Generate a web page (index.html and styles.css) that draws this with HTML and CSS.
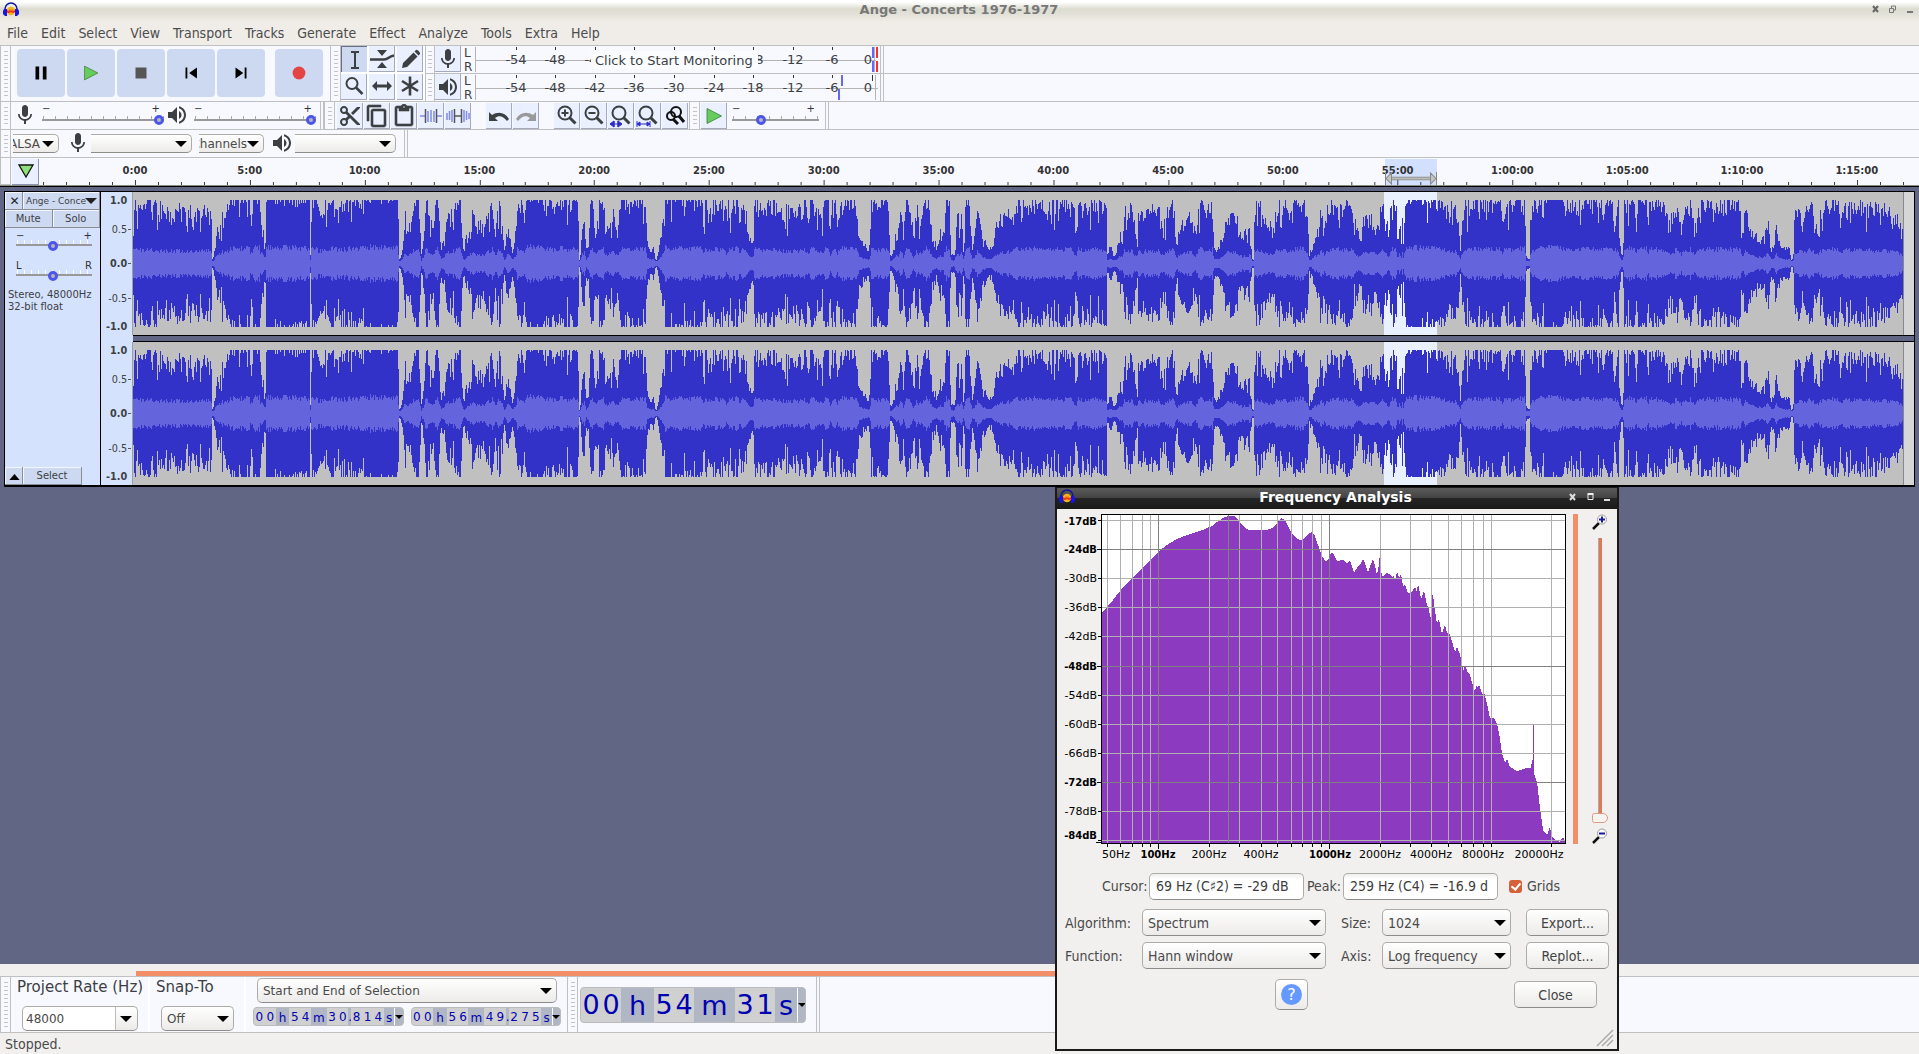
FILE: index.html
```html
<!DOCTYPE html>
<html lang="en">
<head>
<meta charset="utf-8">
<title>Ange - Concerts 1976-1977</title>
<link rel="stylesheet" href="styles.css">
</head>
<body>
<svg class="defs" aria-hidden="true">
  <symbol id="logo" viewBox="0 0 16 15"><path d="M2 9V7a6 6 0 0 1 12 0v2" fill="none" stroke="#14149c" stroke-width="1.5"/><circle cx="8" cy="9" r="4.2" fill="#f6b21b"/><path d="M4 9l1-1 1 2 1-3 1 3 1-3 1 3 1-2 1 1v1l-2 1-2-1-2 1-3-1z" fill="#f01c10"/><path d="M1 7h3v7H2L0 12V9zM15 7h-3v7h2l2-2V9z" fill="#1414e8"/></symbol>
  <symbol id="mic" viewBox="0 0 24 24"><path d="M12 14c1.66 0 3-1.34 3-3V5c0-1.660-1.340-3-3-3S9 3.340 9 5v6c0 1.660 1.340 3 3 3zm5.300-3c0 3-2.540 5.100-5.300 5.100S6.700 14 6.700 11H5c0 3.410 2.720 6.230 6 6.720V21h2v-3.280c3.280-.48 6-3.300 6-6.720h-1.700z"/></symbol>
  <symbol id="speaker" viewBox="0 0 24 24"><path d="M3 9v6h4l5 5V4L7 9H3zm13.500 3c0-1.770-1.020-3.290-2.500-4.030v8.050c1.480-.73 2.500-2.250 2.500-4.020zM14 3.230v2.060c2.890.86 5 3.540 5 6.710s-2.110 5.850-5 6.710v2.060c4.010-.91 7-4.490 7-8.770s-2.990-7.860-7-8.770z"/></symbol>
  <symbol id="lens" viewBox="0 0 24 24"><circle cx="10" cy="9" r="6.500" fill="none" stroke="currentColor" stroke-width="2"/><path d="M14.500 13.500l6 6" stroke="currentColor" stroke-width="3"/></symbol>
</svg>

<header class="titlebar"><svg class="logo"><use href="#logo"/></svg><h1>Ange - Concerts 1976-1977</h1>
  <svg class="wm" viewBox="0 0 44 10"><path d="M2 2l5 6M7 2L2 8" stroke="#666" stroke-width="2"/><path d="M18.500 4.500h4v4h-4zM20.500 4v-2h4v4h-2" fill="none" stroke="#777"/><path d="M36 7h6v2h-6z" fill="#777"/></svg></header>
<nav class="menubar"><a href="#">File</a><a href="#">Edit</a><a href="#">Select</a><a href="#">View</a><a href="#">Transport</a><a href="#">Tracks</a><a href="#">Generate</a><a href="#">Effect</a><a href="#">Analyze</a><a href="#">Tools</a><a href="#">Extra</a><a href="#">Help</a></nav>

<section class="bar bar-top">
  <i class="grip"></i>
  <div class="transport">
    <button aria-label="Pause"><svg viewBox="0 0 24 24"><path d="M6 5h4v14H6zM14 5h4v14h-4z" fill="#000"/></svg></button>
    <button aria-label="Play"><svg viewBox="0 0 24 24"><path d="M5 4.500v15L19.500 12z" fill="#66cc5c" stroke="#3c7a36" stroke-width=".8"/></svg></button>
    <button aria-label="Stop"><svg viewBox="0 0 24 24"><path d="M6 6h12v12H6z" fill="#555"/></svg></button>
    <button aria-label="Skip to start"><svg viewBox="0 0 24 24"><path d="M6 6h2v12H6zm12.500 0v12L10 12z" fill="#000"/></svg></button>
    <button aria-label="Skip to end"><svg viewBox="0 0 24 24"><path d="M16 6h2v12h-2zM6 6v12l8.500-6z" fill="#000"/></svg></button>
    <button aria-label="Record" class="rec"><svg viewBox="0 0 24 24"><circle cx="12" cy="12" r="7" fill="#e34444"/></svg></button>
  </div>
  <i class="grip"></i>
  <div class="tools">
    <button class="tb on" aria-label="Selection"><svg viewBox="0 0 24 24"><path d="M8 4h3l1 1 1-1h3M8 20h3l1-1 1 1h3M12 5v14" fill="none" stroke="currentColor" stroke-width="2"/></svg></button>
    <button class="tb" aria-label="Envelope"><svg viewBox="0 0 24 24"><path d="M7 3h10l-5 6zM7 21h10l-5-6z"/><path d="M0 12.500h14c5 0 4-3 10-4" fill="none" stroke="currentColor" stroke-width="2.500"/></svg></button>
    <button class="tb" aria-label="Draw"><svg viewBox="0 0 24 24"><path d="M4 21l1-5L15.500 5.500l4 4L9 20zM16.500 4.500l1.500-1.500c1-1 5 3 4 4l-1.500 1.500z"/></svg></button>
    <button class="tb" aria-label="Zoom"><svg viewBox="0 0 24 24"><circle cx="10" cy="9.500" r="5.500" fill="none" stroke="currentColor" stroke-width="2"/><path d="M14 13.500l6.500 6.500" stroke="currentColor" stroke-width="2.500"/></svg></button>
    <button class="tb" aria-label="Time shift"><svg viewBox="0 0 24 24"><path d="M2 12l5-5v3.500h10V7l5 5-5 5v-3.500H7V17z"/></svg></button>
    <button class="tb" aria-label="Multi-tool"><svg viewBox="0 0 24 24"><path d="M12 2.500v19M4 7l16 10M20 7L4 17" stroke="currentColor" stroke-width="2.600"/></svg></button>
  </div>
  <div class="meters">
    <div class="meter-row"><i class="grip"></i><button class="tb" aria-label="Recording meter"><svg><use href="#mic"/></svg></button>
      <svg class="meter" viewBox="0 0 414 27"><g class="lr"><text x="2" y="11">L</text><text x="2" y="25">R</text></g><path class="axis" d="M13.500 1v25M13.500 14.500h400M412.500 1v25"/><path class="tick" d="M54.500 1v3M93.500 1v3M133.500 1v3M172.500 1v3M212.500 1v3M252.500 1v3M291.500 1v3M331.500 1v3M370.500 1v3M410.500 1v6"/><g class="num"><text x="54" y="18">-54</text><text x="93" y="18">-48</text><text x="133" y="18">-42</text><text x="291" y="18">-18</text><text x="331" y="18">-12</text><text x="370" y="18">-6</text><text x="406" y="18">0</text></g><path d="M410 1h2v11h-2zM410 15h2v11h-2z" fill="#6666f8"/><path d="M414 1h2v11h-2zM414 15h2v11h-2z" fill="#fa3030"/><path d="M129 5h167v18H129z" fill="#fbfcff"/><text x="133" y="19" class="mon">Click to Start Monitoring</text></svg><i class="edge"></i></div>
    <div class="meter-row"><i class="grip"></i><button class="tb" aria-label="Playback meter"><svg><use href="#speaker"/></svg></button>
      <svg class="meter" viewBox="0 0 414 27"><g class="lr"><text x="2" y="11">L</text><text x="2" y="25">R</text></g><path class="axis" d="M13.500 1v25M13.500 14.500h402M413.500 1v25"/><path class="tick" d="M54.500 1v3M93.500 1v3M133.500 1v3M172.500 1v3M212.500 1v3M252.500 1v3M291.500 1v3M331.500 1v3M370.500 1v3M410.500 1v6"/><g class="num"><text x="54" y="18">-54</text><text x="93" y="18">-48</text><text x="133" y="18">-42</text><text x="172" y="18">-36</text><text x="212" y="18">-30</text><text x="252" y="18">-24</text><text x="291" y="18">-18</text><text x="331" y="18">-12</text><text x="370" y="18">-6</text><text x="406" y="18">0</text></g><path d="M379 1h2v11h-2zM376 15h2v11h-2z" fill="#6666f8"/></svg><i class="edge"></i></div>
  </div>
</section>

<section class="bar bar-mid">
  <i class="grip"></i>
  <svg class="ico mic-in"><use href="#mic"/></svg>
  <div class="slider"><span>−</span><span>+</span><input type="range" value="100" aria-label="Recording volume"></div>
  <svg class="ico"><use href="#speaker"/></svg>
  <div class="slider after"><span>−</span><span>+</span><input type="range" value="100" aria-label="Playback volume"></div>
  <i class="edge"></i><i class="grip"></i>
  <div class="group">
    <button class="tb" aria-label="Cut"><svg viewBox="0 0 24 24"><path d="M9.640 7.640c.23-.5.360-1.050.36-1.640 0-2.210-1.790-4-4-4S2 3.790 2 6s1.790 4 4 4c.59 0 1.140-.13 1.640-.36L10 12l-2.360 2.360C7.140 14.130 6.590 14 6 14c-2.210 0-4 1.790-4 4s1.790 4 4 4 4-1.790 4-4c0-.59-.13-1.140-.36-1.640L12 14l7 7h3v-1L9.640 7.640zM6 8a2 2 0 1 1 0-4 2 2 0 0 1 0 4zm0 12a2 2 0 1 1 0-4 2 2 0 0 1 0 4zM19 3l-6 6 2 2 7-7V3z"/></svg></button>
    <button class="tb" aria-label="Copy"><svg viewBox="0 0 24 24"><path d="M16 1H4c-1.100 0-2 .9-2 2v14h2V3h12V1zm3 4H8c-1.100 0-2 .9-2 2v14c0 1.100.9 2 2 2h11c1.100 0 2-.9 2-2V7c0-1.100-.9-2-2-2zm0 16H8V7h11v14z" stroke="currentColor" stroke-width=".6"/></svg></button>
    <button class="tb" aria-label="Paste"><svg viewBox="0 0 24 24"><path d="M19 2h-4.180C14.400.84 13.300 0 12 0S9.600.84 9.180 2H5c-1.100 0-2 .9-2 2v16c0 1.100.9 2 2 2h14c1.100 0 2-.9 2-2V4c0-1.100-.9-2-2-2zm-7 0a1 1 0 1 1 0 2 1 1 0 0 1 0-2zm7 18H5V4h2v3h10V4h2v16z" stroke="currentColor" stroke-width=".6"/></svg></button>
    <button class="tb" aria-label="Trim"><svg class="line" viewBox="0 0 24 24" stroke="#7f8de8" stroke-width="1.500"><path d="M1 12h5M18 12h5M9 7v11M12 6v12M15 7v11"/><path d="M6.500 5v14M17.500 5v14" stroke="#555"/></svg></button>
    <button class="tb" aria-label="Silence"><svg class="line" viewBox="0 0 24 24" stroke="#7f8de8" stroke-width="1.500"><path d="M1 9v7M3.500 7v9M6 6v12M18 6v12M20.500 7v9M23 9v6"/><path d="M8.500 5v14M15.500 5v14M9 12h6" stroke="#555"/></svg></button>
  </div>
  <div class="group">
    <button class="tb" aria-label="Undo"><svg viewBox="0 0 24 24"><path d="M2 8v9h9l-3-3c4-3 8-2 12 3l2-2C18 8 11 7 5 11z"/></svg></button>
    <button class="tb off" aria-label="Redo"><svg viewBox="0 0 24 24"><path d="M22 8v9h-9l3-3c-4-3-8-2-12 3l-2-2C6 8 13 7 19 11z"/></svg></button>
  </div>
  <div class="group">
    <button class="tb" aria-label="Zoom in"><svg viewBox="0 0 24 24"><use href="#lens"/><path d="M6.500 9h7M10 5.500v7" stroke="currentColor" stroke-width="2"/></svg></button>
    <button class="tb" aria-label="Zoom out"><svg viewBox="0 0 24 24"><use href="#lens"/><path d="M6.500 9h7" stroke="currentColor" stroke-width="2"/></svg></button>
    <button class="tb" aria-label="Zoom to selection"><svg viewBox="0 0 24 24"><use href="#lens"/><path d="M1 20h12M5 17l-4 3 4 3zM9 17l4 3-4 3zM5 17v6M9 17v6" stroke="#2b2bc4" fill="#2b2bc4"/></svg></button>
    <button class="tb" aria-label="Fit project"><svg viewBox="0 0 24 24"><use href="#lens"/><path d="M1 20h13M1 17v6M14 17v6M4 18l-3 2 3 2zM11 18l3 2-3 2z" stroke="#2b2bc4" fill="#2b2bc4"/></svg></button>
    <button class="tb" aria-label="Zoom toggle"><svg class="line" viewBox="0 0 24 24" stroke="#111" stroke-width="2"><circle cx="13" cy="8" r="5"/><circle cx="8" cy="12" r="4"/><path d="M16 12l5 6M10 15l5 5" stroke-width="3"/></svg></button>
  </div>
  <i class="grip"></i>
  <button class="tb" aria-label="Play at speed"><svg viewBox="0 0 24 24"><path d="M5 4.500v15L19.500 12z" fill="#66cc5c" stroke="#3c7a36" stroke-width=".8"/></svg></button>
  <div class="slider short"><span>−</span><span>+</span><input type="range" value="31" aria-label="Play speed"></div>
  <i class="edge"></i>
</section>

<section class="bar bar-dev">
  <i class="grip"></i>
  <div class="combo clip host"><select aria-label="Audio host"><option>ALSA</option></select></div>
  <svg class="ico"><use href="#mic"/></svg>
  <div class="combo clip dev"><select aria-label="Recording device"><option></option></select></div>
  <div class="combo clip chan"><select aria-label="Channels"><option>2 Channels</option></select></div>
  <svg class="ico"><use href="#speaker"/></svg>
  <div class="combo clip dev"><select aria-label="Playback device"><option></option></select></div>
  <i class="edge"></i>
</section>

<section class="timeline">
  <i class="stub"></i>
  <button class="pin" aria-label="Pin play head"><svg viewBox="0 0 24 24"><path d="M5 6h14l-7 12z" fill="#8fe07c" stroke="#111" stroke-width="1.300"/></svg></button>
  <div class="ruler">
    <div class="sel-time"></div>
    <svg class="ticks" viewBox="0 0 1771 27" preserveAspectRatio="none"><path id="ticks"/></svg>
    <div class="labels"><span>0:00</span><span>5:00</span><span>10:00</span><span>15:00</span><span>20:00</span><span>25:00</span><span>30:00</span><span>35:00</span><span>40:00</span><span>45:00</span><span>50:00</span><span>55:00</span><span>1:00:00</span><span>1:05:00</span><span>1:10:00</span><span>1:15:00</span></div>
    <svg class="loop" viewBox="0 0 52 14" preserveAspectRatio="none"><path d="M.5 0v14M51.500 0v14" stroke="#888"/><path d="M6 5.500h40v3H6z" fill="#bbb" stroke="#888"/><path d="M1 7l5.500-6v12zM51 7l-5.500-6v12z" fill="#c6c6c0" stroke="#888"/></svg>
  </div>
</section>

<main class="workspace">
  <article class="track">
    <aside class="panel">
      <div class="cells"><button class="x" aria-label="Close track">✕</button><button class="name"><span>Ange - Conce</span></button></div>
      <div class="cells half"><button>Mute</button><button>Solo</button></div>
      <div class="slider mini"><span>−</span><span>+</span><input type="range" value="49" aria-label="Gain"></div>
      <div class="slider mini"><span>L</span><span>R</span><input type="range" value="49" aria-label="Pan"></div>
      <p>Stereo, 48000Hz<br>32-bit float</p>
      <div class="cells foot"><button class="x" aria-label="Collapse"><svg viewBox="0 0 12 7"><path d="M0 7h12L6 0z"/></svg></button><button class="select">Select</button></div>
    </aside>
    <div class="channels">
      <div class="channel"><svg class="vruler" viewBox="0 0 32 143"><g><text class="b" x="27" y="10">1.0</text><text x="27" y="40">0.5</text><text class="b" x="27" y="75">0.0</text><text x="27" y="111">-0.5</text><text class="b" x="27" y="140">-1.0</text></g><path d="M28 36.500h3M28 71.500h3M28 107.500h3"/></svg>
        <div class="wave"><div class="sel"></div><svg viewBox="0 0 1771 143" preserveAspectRatio="none"><path class="peak"/><path class="rms"/></svg></div></div>
      <div class="split"></div>
      <div class="channel"><svg class="vruler" viewBox="0 0 32 143"><g><text class="b" x="27" y="10">1.0</text><text x="27" y="40">0.5</text><text class="b" x="27" y="75">0.0</text><text x="27" y="111">-0.5</text><text class="b" x="27" y="140">-1.0</text></g><path d="M28 36.500h3M28 71.500h3M28 107.500h3"/></svg>
        <div class="wave"><div class="sel"></div><svg viewBox="0 0 1771 143" preserveAspectRatio="none"><path class="peak"/><path class="rms"/></svg></div></div>
    </div>
  </article>
</main>

<div class="hscroll"><div></div></div>
<section class="bar bar-bottom">
  <i class="grip"></i>
  <div class="field rate"><label for="rate">Project Rate (Hz)</label><div class="combo edit"><input id="rate" value="48000"><i></i></div></div>
  <div class="field snap"><label for="snap">Snap-To</label><div class="combo"><select id="snap"><option>Off</option></select></div></div>
  <div class="range">
    <div class="combo"><select aria-label="Selection format"><option>Start and End of Selection</option></select></div>
    <div class="times">
      <div class="time"><b>0</b><b>0</b><i class="h">h</i><b>5</b><b>4</b><i class="m">m</i><b>3</b><b>0</b><i class="dot">.</i><b>8</b><b>1</b><b>4</b><i class="s">s</i><button aria-label="Start format"></button></div>
      <div class="time"><b>0</b><b>0</b><i class="h">h</i><b>5</b><b>6</b><i class="m">m</i><b>4</b><b>9</b><i class="dot">.</i><b>2</b><b>7</b><b>5</b><i class="s">s</i><button aria-label="End format"></button></div>
    </div>
  </div>
  <i class="grip"></i>
  <div class="time big"><b>0</b><b>0</b><i class="h">h</i><b>5</b><b>4</b><i class="m">m</i><b>3</b><b>1</b><i class="s">s</i><button aria-label="Position format"></button></div>
  <i class="edge"></i>
</section>
<footer class="status">Stopped.</footer>

<div class="dialog" role="dialog" aria-label="Frequency Analysis">
  <div class="dlg-title"><svg class="logo"><use href="#logo"/></svg><h2>Frequency Analysis</h2><svg class="wm" viewBox="0 0 44 10"><path d="M2 2l5 6M7 2L2 8" stroke="#ddd" stroke-width="2"/><path d="M20 2.500h5v5h-5z" fill="none" stroke="#eee"/><path d="M19.500 2h6" stroke="#eee" stroke-width="2"/><path d="M36 7h6v2h-6z" fill="#ddd"/></svg></div>
  <div class="plot">
    <svg class="chart" viewBox="-44 -6 510 356">
      <path d="M0 0h463v329H0z" fill="#fff"/>
      <path class="spec" d="M0 328V97L6 91 11 85 18 76 30 63 40 53 48 45 56 37 65 30 75 24 85 20 95 17 103 14 110 11 115 7 121 3 126 1H132L135 3 138 7 143 13 147 15H165L170 13 175 8 179 3 183 5 188 15 193 22 198 25 201 24 206 19 210 17 213 21 216 30 220 41 224 47 227 43 229 38H231L235 46 241 45 245 48 248 45 252 58 255 53 259 48 261 44 263 48 266 57 271 44 273 50 275 60 277 50V43H278V53L281 62 284 58 287 59 290 62 292 60 293 67 295 56 297 63 299 59 301 71 303 69 306 78H309L313 72 315 77 316 68 319 84 322 76 325 90 327 93 328 102H329V80H331L334 103 335 108 337 104 340 119 343 110 345 118 347 117 350 126 353 137 355 132 358 139 360 150 362 156 363 149 366 158 368 160 371 171 373 176 375 169 376 174 377 169 380 179 382 177 385 189 388 203H392L395 209 397 218 400 238 403 248 405 244 408 252 415 256 425 253H429L430 245H431V210H432V259L435 267 438 293 441 315 445 320 448 312 450 322 455 326 458 327 461 322 463 327V328z"/>
      <path class="grid" d="M0 5.500h463M0 63.500h463M0 92.500h463M0 121.500h463M0 180.500h463M0 209.500h463M0 238.500h463M0 296.500h463M0 325.500h463M5.500 0v329M18.500 0v329M30.500 0v329M40.500 0v329M48.500 0v329M107.500 0v329M137.500 0v329M159.500 0v329M175.500 0v329M189.500 0v329M200.500 0v329M210.500 0v329M219.500 0v329M278.500 0v329M308.500 0v329M329.500 0v329M346.500 0v329M359.500 0v329M371.500 0v329M381.500 0v329M389.500 0v329M449.500 0v329"/>
      <path class="grid major" d="M0 34.500h463M0 151.500h463M0 267.500h463M56.500 0v329M126.500 0v329M227.500 0v329"/>
      <path class="frame" d="M-.5-.5h464v329h-464zM-4 5.500h3M-5 34.500h4M-4 63.500h3M-4 92.500h3M-4 121.500h3M-5 151.500h4M-4 180.500h3M-4 209.500h3M-4 238.500h3M-5 267.500h4M-4 296.500h3M-4 325.500h3M-6 327.500h5M5.500 329v3M18.500 329v3M30.500 329v3M40.500 329v3M48.500 329v3M56.500 329v5M107.500 329v3M137.500 329v3M159.500 329v3M175.500 329v3M189.500 329v3M200.500 329v3M210.500 329v3M219.500 329v3M227.500 329v5M278.500 329v3M308.500 329v3M329.500 329v3M346.500 329v3M359.500 329v3M371.500 329v3M381.500 329v3M389.500 329v3M449.500 329v3"/>
      <g class="yl"><text class="b" x="-5" y="10">-17dB</text><text class="b" x="-5" y="38">-24dB</text><text x="-5" y="67">-30dB</text><text x="-5" y="96">-36dB</text><text x="-5" y="125">-42dB</text><text class="b" x="-5" y="155">-48dB</text><text x="-5" y="184">-54dB</text><text x="-5" y="213">-60dB</text><text x="-5" y="242">-66dB</text><text class="b" x="-5" y="271">-72dB</text><text x="-5" y="300">-78dB</text><text class="b" x="-5" y="324">-84dB</text></g>
      <g class="xl"><text x="14" y="343">50Hz</text><text class="b" x="56" y="343">100Hz</text><text x="107" y="343">200Hz</text><text x="159" y="343">400Hz</text><text class="b" x="228" y="343">1000Hz</text><text x="278" y="343">2000Hz</text><text x="329" y="343">4000Hz</text><text x="381" y="343">8000Hz</text><text x="437" y="343">20000Hz</text></g>
    </svg>
    <div class="pan"></div>
    <div class="vzoom">
      <svg viewBox="0 0 16 16"><path d="M1 15l6-6" stroke="#111" stroke-width="2.500"/><circle cx="10" cy="5.500" r="4.500" fill="#fff" stroke="#999"/><path d="M7 5.500h6M10 2.500v6" stroke="#1616a0" stroke-width="2"/></svg>
      <input type="range" value="0" aria-label="Vertical zoom">
      <svg viewBox="0 0 16 16"><path d="M1 15l6-6" stroke="#111" stroke-width="2.500"/><circle cx="10" cy="5.500" r="4.500" fill="#fff" stroke="#999"/><path d="M7 5.500h6" stroke="#1616a0" stroke-width="2"/></svg>
    </div>
  </div>
  <div class="row readout"><label for="cur">Cursor:</label><input id="cur" value="69 Hz (C♯2) = -29 dB" readonly><label for="pk">Peak:</label><input id="pk" value="259 Hz (C4) = -16.9 d" readonly><label class="check"><input type="checkbox" checked>Grids</label></div>
  <div class="form">
    <label for="alg">Algorithm:</label><div class="combo"><select id="alg"><option>Spectrum</option></select></div><label for="size">Size:</label><div class="combo"><select id="size"><option>1024</option></select></div><button class="btn">Export...</button>
    <label for="fn">Function:</label><div class="combo"><select id="fn"><option>Hann window</option></select></div><label for="axis">Axis:</label><div class="combo"><select id="axis"><option>Log frequency</option></select></div><button class="btn">Replot...</button>
  </div>
  <div class="row foot"><button class="btn help" aria-label="Help"><span>?</span></button><button class="btn close">Close</button></div>
  <svg class="sizer" viewBox="0 0 18 18"><path d="M1 17L17 1M6 17L17 6M11 17l6-6" stroke="#aaa" stroke-width="1.500"/></svg>
</div>
<script src="app.js"></script>
</body>
</html>
```
FILE: styles.css
```css
* { box-sizing: border-box; }
:root {
  --line: #bfc0c2;
  --bar: #f8f9ff;
  --face: #cdd9f1;
  --panel: #d5e2fe;
  --chrome: #f1f0ee;
}
body {
  margin: 0;
  min-height: 100vh;
  display: flex;
  flex-direction: column;
  position: relative;
  overflow-x: hidden;
  background: var(--chrome);
  color: #4a4a4a;
  font: 14px "DejaVu Sans Condensed", "DejaVu Sans", sans-serif;
}
button, input, select { font: inherit; color: inherit; margin: 0; padding: 0; border: 0; outline: 0; background: none; }
button { display: flex; align-items: center; justify-content: center; }
i { font-style: normal; }
h1, h2, p { margin: 0; }
.defs { position: absolute; width: 0; height: 0; }

.titlebar { display: flex; align-items: center; height: 22px; padding: 0 4px 4px 3px; background: linear-gradient(#fff 2px, #dcdcd0 9px, #e2e1d8 14px, #f0ede8); }
.logo { width: 16px; height: 15px; flex: none; }
.titlebar h1 { flex: 1; text-align: center; font: bold 13px "DejaVu Sans", sans-serif; color: #777; padding-left: 28px; }
.wm { width: 44px; height: 10px; flex: none; }
.menubar { display: flex; gap: 13px; height: 23px; padding: 0 7px 2px; align-items: center; background: #f0ede8; }
.menubar a { color: #4c4c4c; text-decoration: none; }

/* toolbars */
.bar { display: flex; background: var(--bar); border-top: 1px solid var(--line); }
.grip { flex: none; width: 11px; border-left: 1px solid var(--line); border-right: 1px solid var(--line); background: repeating-linear-gradient(#c4c4c4 0 1px, transparent 1px 4px) center / 4px calc(100% - 10px) no-repeat; }
.edge { width: 4px; flex: none; border: solid var(--line); border-width: 0 1px; }
.bar-top { height: 56px; }
.transport { display: flex; align-items: center; gap: 2px; padding: 0 7px 1px 6px; }
.transport button { width: 48px; height: 48px; border-radius: 4px; background: var(--face); }
.transport .rec { margin-left: 8px; }
.transport svg { width: 22px; height: 22px; }
.tools { display: grid; grid-template-columns: repeat(3, 28px); background: #fff; }
.tb { width: 26px; height: 26px; flex: none; background: #eaf0ff; border: solid #a4aabc; border-width: 0 1px 1px 0; color: #3c4043; }
.tb.on { background: var(--face); border: solid #6a7088; border-width: 1px 0 0 1px; }
.tb.off { color: #999; }
.tb svg { width: 24px; height: 24px; fill: currentColor; flex: none; }
.tb svg.line { fill: none; }
.meters { flex: 1; display: grid; grid-template-rows: 27px 28px; }
.meter-row { display: flex; }
.meter-row + .meter-row { border-top: 1px solid var(--line); }
.meter-row .grip { width: 10px; }
.meter-row .tb { margin-right: 1px; }
.meter { width: 414px; height: 27px; flex: none; margin-right: 4px; overflow: visible; }
.meter text { font: 13px "DejaVu Sans", sans-serif; fill: #3c4043; }
.meter .num { text-anchor: middle; }
.meter .lr text { font-size: 12px; }
.axis { stroke: #b4b4b4; fill: none; shape-rendering: crispEdges; }
.tick { stroke: #333; shape-rendering: crispEdges; }

.bar-mid { height: 28px; }
.bar-mid .tb { margin-top: 1px; }
.ico { width: 24px; height: 24px; flex: none; margin: 1px 0; fill: #3c4043; }
.mic-in { margin-left: 2px; margin-right: 5px; }
.slider { width: 122px; flex: none; display: grid; grid-template-columns: 1fr 1fr; grid-template-rows: 10px 15px; font: 10px "DejaVu Sans", sans-serif; color: #333; }
.slider span { line-height: 14px; }
.slider span + span { text-align: right; padding-right: 4px; }
.slider input, .vzoom input { appearance: none; -webkit-appearance: none; }
.slider input { grid-column: 1 / 3; width: 100%; height: 14px; background: linear-gradient(#999, #999) 0 7px / 100% 2px no-repeat, repeating-linear-gradient(90deg, #aaa 0 1px, transparent 1px 12px) 1px 4px / 100% 3px no-repeat; }
.slider input::-webkit-slider-thumb { -webkit-appearance: none; width: 10px; height: 10px; margin-top: 1px; border-radius: 50%; border: 3px solid #4c55ec; background: #b8b8b8; }
.bar-mid .slider + .ico { margin-left: 1px; margin-right: 5px; }
.slider.after { margin-right: 4px; }
.slider.short { width: 87px; margin: 0 6px 0 5px; }
.group { display: flex; gap: 1px; padding-left: 1px; margin-right: 14px; }
.grip + .group { padding-left: 2px; }
.bar-mid .group + .grip { margin-left: -13px; }
.bar-mid .grip + .tb { margin-left: 1px; }

.combo { position: relative; display: flex; }
.combo::after, .time button::after { content: ""; border: 6px solid transparent; border-top-color: #000; border-bottom: 0; }
.combo::after { position: absolute; right: 10px; top: 50%; margin-top: -3px; pointer-events: none; }
.combo select { appearance: none; width: 100%; padding-left: 5px; }
.combo select, .btn, .edit, .readout > input { border: 1px solid #aeaca8; border-bottom-color: #8e8c88; border-radius: 5px; background: linear-gradient(#fff, #ecebe9); }
.bar-dev { height: 28px; align-items: stretch; }
.bar-dev .combo { height: 19px; margin-top: 4px; overflow: hidden; justify-content: flex-end; font: 12px "DejaVu Sans", sans-serif; }
.bar-dev .combo::after { right: 5px; }
.bar-dev select { flex: none; width: calc(100% + 8px); }
.bar-dev .host { width: 46px; margin-left: 2px; margin-right: 7px; }
.bar-dev .host select { padding-left: 3px; }
.bar-dev .dev { width: 101px; }
.bar-dev .chan { width: 65px; margin-left: 7px; margin-right: 6px; }
.bar-dev .chan select { width: 90px; }
.bar-dev .ico + .dev { margin-left: 1px; }
.bar-dev .edge { margin-left: 8px; }

/* timeline */
.timeline { display: flex; height: 29px; background: var(--bar); border-top: 1px solid var(--line); border-bottom: 1px solid #8a8d84; padding-right: 15px; }
.stub { width: 11px; border: 1px solid var(--line); border-top: 0; }
.pin { width: 27px; height: 26px; margin: 1px 95px 0 1px; padding: 0 0 2px 2px; background: #eaf0ff; border: solid #8a94b0; border-width: 0 1px 1px 0; }
.pin svg { width: 24px; height: 24px; flex: none; }
.ruler { flex: 1; position: relative; }
.ticks { position: absolute; inset: 0; width: 100%; height: 27px; overflow: visible; }
.ticks path { stroke: #3c3c3c; fill: none; shape-rendering: crispEdges; }
.labels { position: relative; display: grid; grid-template-columns: repeat(15, 300fr) 126fr; font: bold 10px/12px "DejaVu Sans", sans-serif; color: #333; padding-top: 7px; }
.labels span { width: 2px; display: flex; justify-content: center; white-space: nowrap; }
.sel-time, .loop { position: absolute; left: 70.7%; width: 2.94%; }
.sel-time { top: 1px; bottom: 0; background: #d2e0fd; }
.loop { top: 14px; height: 13px; }

/* tracks */
.workspace { flex: 1; background: #626685; border-top: 1px solid #000; padding: 4px 4px 0; }
.track { display: flex; border: 1px solid #000; border-bottom-width: 2px; color: #3c4043; }
.panel { width: 96px; flex: none; background: var(--panel); border-right: 1px solid #000; display: flex; flex-direction: column; font: 10px/12px "DejaVu Sans", sans-serif; }
.cells { display: grid; grid-template-columns: 18px 1fr; }
.cells.half { grid-template-columns: 1fr 1fr; }
.cells button { height: 18px; background: var(--face); border: solid #8a8d94; border-width: 0 1px 1px 0; box-shadow: inset 1px 1px #f2f6ff; overflow: hidden; }
.cells.foot { grid-template-columns: 18px 59px; margin-top: auto; }
.cells svg { width: 11px; height: 6px; margin-top: 2px; }
.cells .x { padding-left: 2px; font-size: 12px; color: #222; }
.name { position: relative; font-size: 9px; }
.cells .name { justify-content: flex-start; padding-left: 3px; }
.name::after { content: ""; position: absolute; right: 2px; top: 6px; border: 6px solid transparent; border-top-color: #222; border-bottom: 0; }
.slider.mini { width: 76px; margin: 1px 10px 7px 11px; grid-template-rows: 9px 13px; }
.slider.mini input { background: linear-gradient(#999, #999) 0 6px / 100% 2px no-repeat, repeating-linear-gradient(90deg, #fff 0 1px, transparent 1px 7px) 1px 2px / 100% 4px no-repeat; }
.slider.mini span { padding: 0; }
.panel p { padding: 1px 3px; white-space: nowrap; }
.channels { flex: 1; background: linear-gradient(90deg, var(--panel) 32px, #626685 32px); }
.channel { display: flex; height: 143px; background: #d6d6d6; }
.vruler { width: 32px; height: 143px; flex: none; background: var(--panel); border-right: 1px solid #9aa0a8; }
.vruler text { font: 10px "DejaVu Sans", sans-serif; fill: #3c4043; text-anchor: end; }
svg .b { font-weight: bold !important; }
.vruler path { stroke: #555; shape-rendering: crispEdges; }
.wave { flex: 1; margin-right: 10px; position: relative; background: silver; border-right: 1px solid #888; }
.wave svg { position: relative; display: block; width: 100%; height: 143px; }
.wave path { shape-rendering: crispEdges; }
.wave .peak { fill: #3232c8; }
.wave .rms { fill: #6464dc; }
.sel { position: absolute; top: 0; bottom: 0; left: 70.7%; width: 3%; background: #e9f1ff; }
.split { height: 7px; margin-left: 32px; border: solid #000; border-width: 1px 0; }

/* bottom */
.hscroll { height: 12px; padding: 7px 519px 0 136px; }
.hscroll div { height: 5px; background: #f28e68; }
.bar-bottom { height: 57px; border-bottom: 1px solid var(--line); }
.field label { display: block; font: 15px/20px "DejaVu Sans", sans-serif; color: #3c4043; white-space: nowrap; }
.bar-bottom .combo { height: 25px; font: 12px "DejaVu Sans", sans-serif; }
.bar-bottom .combo::after { right: 5px; }
.field .combo { margin: 9px 5px 0; }
.field { border-right: 2px solid #fff; }
.rate { width: 139px; padding-left: 6px; padding-right: 7px; }
.rate .combo { margin-right: 0; width: 116px; }
.edit input { flex: 1; width: 0; padding-left: 3px; background: #fff; border-radius: 5px 0 0 5px; }
.edit i { width: 22px; border-left: 1px solid #bbb; }
.snap { width: 96px; padding-left: 6px; }
.snap .combo { width: 73px; }
.range { width: 321px; padding: 1px 6px 0 7px; }
.range .combo { width: 300px; margin-left: 4px; }
.times { display: flex; gap: 7px; margin-top: 4px; }
.time { display: flex; height: 19px; background: #b1b6c4; border: 1px solid #bbb; border-radius: 4px; overflow: hidden; color: #0000b0; font: 12px/18px "DejaVu Sans", sans-serif; text-align: center; }
.time b { font-weight: normal; width: 11px; background: #d0d0d0; }
.time .h { width: 14px; padding-top: 1px; }
.time .m { width: 16px; padding-top: 1px; }
.time .dot { width: 3px; }
.time .s { width: 11px; padding-top: 1px; }
.time button { width: 8px; border-left: 1px solid #fff; }
.time button::after { border-width: 4px 4px 0; }
.time.big { height: 36px; margin: 10px 10px 0 2px; font-size: 27px; line-height: 34px; }
.big b { width: 20px; }
.big .h { width: 33px; }
.big .m { width: 41px; }
.big .s { width: 22px; }
.status { height: 21px; padding: 3px 5px 0; line-height: 17px; }

/* frequency analysis window */
.dialog { position: absolute; left: 1055px; top: 487px; width: 564px; height: 564px; background: var(--chrome); border: 2px solid #1a1a1a; border-top-width: 1px; padding: 0 7px 0 8px; }
.dlg-title { display: flex; align-items: center; height: 21px; margin: 0 -7px 0 -8px; padding: 0 5px 4px 2px; background: linear-gradient(#5c5c5c, #444 45%, #242424 50%, #1a1a1a); }
.dlg-title h2 { flex: 1; text-align: center; padding-left: 28px; font: bold 14px/16px "DejaVu Sans", sans-serif; color: #fff; }
.plot { display: flex; margin-left: -7px; }
.chart { width: 510px; height: 356px; flex: none; }
.chart path { shape-rendering: crispEdges; }
.spec { fill: #8c3ac0; }
.grid, .frame { fill: none; stroke: #b0b0b0; }
.grid.major { stroke: #808080; }
.frame { stroke: #000; }
.chart text { font: 11px "DejaVu Sans", sans-serif; fill: #000; }
.chart .b { font-size: 10px; }
.yl { text-anchor: end; }
.xl { text-anchor: middle; }
.pan { width: 5px; height: 330px; margin: 5px 14px 0 5px; background: #f28e68; }
.vzoom { display: flex; flex-direction: column; align-items: center; width: 16px; height: 330px; margin-top: 5px; }
.vzoom svg { width: 16px; height: 16px; flex: none; }
.vzoom input { writing-mode: vertical-lr; direction: rtl; width: 16px; height: 285px; margin: 8px 0 5px; background: linear-gradient(90deg, #aaa 1px, #de7a54 1px) 6px 0 / 4px 100% no-repeat; }
.vzoom input::-webkit-slider-thumb { -webkit-appearance: none; width: 16px; height: 10px; border: 1px solid #e09a80; border-radius: 4px 8px 8px 4px; background: #f8f4f2; }
.row { display: flex; align-items: center; }
.readout { padding-left: 37px; height: 28px; margin-top: 7px; white-space: nowrap; }
.readout > input { width: 155px; height: 27px; padding: 0 6px; margin: 0 3px 0 1px; background: linear-gradient(#eee, #fff 5px); color: #3c3c3c; }
.readout > label { width: 46px; }
.readout > input + label { width: 35px; }
.readout .check { display: flex; align-items: center; gap: 5px; margin-left: 8px; width: auto; }
.check input { appearance: none; width: 13px; height: 13px; border-radius: 3px; background: #d6603a; display: grid; place-items: center; }
.check input::after { content: ""; width: 4px; height: 7px; border: solid #fff; border-width: 0 2px 2px 0; rotate: 40deg; margin-top: -2px; }
.form { display: grid; grid-template-columns: 77px 184px 56px 129px 83px; grid-auto-rows: 27px; row-gap: 6px; align-items: center; margin-top: 9px; }
.form .combo { height: 27px; }
.form .combo::after { right: 5px; }
.form .combo + label { padding-left: 15px; }
.form .btn { margin-left: 15px; width: 83px; height: 27px; }
.btn { color: #444; }
.row.foot { margin-top: 10px; }
.help { width: 33px; height: 31px; margin-left: 210px; }
.help span { width: 21px; height: 21px; border-radius: 50%; background: #6699ff; color: #fff; font: 16px/21px "DejaVu Sans", sans-serif; }
.close { width: 83px; height: 27px; margin-left: 206px; }
.sizer { position: absolute; right: 3px; bottom: 2px; width: 18px; height: 18px; }
```
FILE: app.js
```js
// Peak envelope of the recording: pairs of (position, peak height),
// in sections that each have their own origin and resolution.
const sections = [
  { from: 133, scale: 1, env: [133,55,140,52,150,56,160,50,185,48,205,50,211,46,212,5,213,6,217,33,222,45,228,50,230,62,249,64,250,40,252,42,253,64,259,64,260,45,263,28,265,20,266,66,309,64,310,8,311,60,316,62,318,52,328,50,332,60,346,56,352,62,364,62,366,68,397,68,398,40,399,3,402,12,405,40,408,30,412,50,415,55,418,62,420,30,421,8,423,20,425,50,427,62,430,32,434,40,436,62,438,50,441,12,443,20,447,50,450,40,453,50,457,63] },
  { from: 440, scale: 2.613, env: [52,62,57,25,62,8,66,22,75,28,87,50,92,30,105,35,115,30,120,50,130,48,137,58,145,25,152,60,158,50,163,30,168,8,176,35,182,30,188,10,197,28,201,56,212,58,219,40,225,68,262,68,270,60,290,60,295,52,300,61,325,61,340,54,352,64,360,64,362,3,365,3,370,35,376,45,382,10,388,22,390,40,396,63,406,30,415,63,425,60,432,30,445,42,455,50,460,30,466,40,471,60,490,58,510,60,537,60,540,20,548,10,557,15,562,3,566,3,572,18,580,35,586,46,588,64,685,62,688,38,692,62,700,50,715,58,735,58,748,40,752,58,780,60,783,35,787,58,800,45,805,25,817,18,820,60,830,54,865,57,880,53,900,48,940,50,955,55,963,28,967,60,1000,45,1005,60,1015,58,1019,30,1025,63,1034,62,1036,2,1039,60,1060,61,1085,58,1092,35,1095,25,1105,18,1118,12,1123,15,1125,60,1145,57,1165,60,1172,48,1176,5,1183,10,1190,25,1197,30,1204,55,1210,22,1217,63,1228,50,1237,18,1245,52,1250,35,1260,52,1270,63,1278,55,1285,22,1297,14,1305,30,1315,25,1320,60,1330,60,1334,8,1343,8,1352,50,1356,25,1362,45,1367,10,1373,60,1382,63,1390,12,1397,25,1404,50,1410,45,1417,20,1430,15,1440,14,1450,30,1465,42,1480,50,1493,45,1500,58] },
  { from: 1000, scale: 2.613, env: [60,60,105,59,115,54,150,58,190,57,201,28,205,58,225,54,250,57,275,56,280,55,282,8,290,15,300,6,307,12,317,30,323,22,326,52,335,45,345,52,355,30,360,25,362,50,375,42,385,52,408,50,412,58,428,30,440,48,450,60,458,50,462,18,470,32,485,40,500,48,512,25,518,45,525,60,540,48,557,58,560,14,570,12,580,22,590,35,600,45,617,48,625,30,635,25,640,30,648,18,655,40,660,3,664,3,667,58,680,50,690,40,710,35,715,28,723,50,740,55,755,50,770,58,800,60,807,30,810,8,820,18,824,30,833,28,840,50,850,32,857,50,870,55,920,56,932,35,940,22,950,38,970,42,990,35,1000,52,1010,38,1017,25,1024,60,1037,58,1041,12,1046,45,1050,15,1053,50,1056,12,1060,58,1070,66,1140,62,1150,58,1170,53,1195,45,1202,30,1205,10,1208,35,1215,50,1230,58,1310,60,1316,33,1320,56,1340,52,1350,63,1373,62,1376,6,1385,4,1388,40,1400,56,1430,66,1468,66,1480,54,1540,62] },
  { from: 1300, scale: 2.533, env: [760,60,785,56,808,56,811,22,816,8,820,8,823,62,850,57,853,35,858,64,880,64,883,40,888,62,930,52,935,35,948,42,955,58,968,35,975,50,990,58,1003,32,1012,60,1060,57,1100,56,1117,57,1120,28,1124,25,1128,58,1137,38,1150,28,1165,22,1175,20,1188,38,1195,12,1203,15,1208,40,1215,20,1230,12,1240,14,1246,3,1251,3,1254,46,1270,48,1285,52,1300,56,1305,35,1315,38,1325,56,1365,58,1372,40,1385,58,1410,52,1440,54,1475,53,1500,46,1515,42,1525,32,1535,26] }
];
const points = sections.flatMap(s => {
  const out = [];
  for (let i = 0; i < s.env.length; i += 2) out.push([s.scale === 1 ? s.env[i] : s.from + s.env[i] / s.scale, s.env[i + 1]]);
  return out;
});

let seed = 1976;
const rand = () => (seed = (seed * 16807) % 2147483647) / 2147483647;

const LEFT = 133, WIDTH = 1771, MID = 71, LIMIT = 63;
let k = 0, upper = "", lower = [], rmsUp = "", rmsLow = [];
for (let x = 0; x < WIDTH; x++) {
  const pos = x + LEFT;
  while (k < points.length - 2 && points[k + 1][0] <= pos) k++;
  const [x0, p0] = points[k], [x1, p1] = points[k + 1];
  const t = Math.max(0, Math.min(1, (pos - x0) / (x1 - x0)));
  const level = p0 + (p1 - p0) * t;
  const swing = level > 10 ? Math.min(9, level / 4) : 1;
  // quiet instants cut notches into the loud passages
  const dip = level > 20 && level < 64 && rand() < 0.18 ? rand() * level * 0.4 : 0;
  const shared = (rand() - 0.4) * swing * 1.9;
  const height = () => Math.round(Math.max(1, Math.min(LIMIT, level + shared + (rand() - 0.5) * swing - dip)));
  const up = height(), down = height();
  const r = Math.round(Math.max(1, Math.min(up - 1, 1 + level * 0.22 + (rand() - 0.5) * level * 0.09)));
  upper += `V${MID - up}h1`;
  lower.unshift(`V${MID + down + 1}h-1`);
  rmsUp += `V${MID - r}h1`;
  rmsLow.unshift(`V${MID + r + 1}h-1`);
}
document.querySelectorAll(".peak").forEach(p => p.setAttribute("d", `M0 ${MID}${upper}${lower.join("")}z`));
document.querySelectorAll(".rms").forEach(p => p.setAttribute("d", `M0 ${MID}${rmsUp}${rmsLow.join("")}z`));

// One tick a minute, a longer one every five minutes.
let ticks = "";
for (let m = -4; m <= 77; m++) {
  const long = m % 5 === 0;
  ticks += `M${Math.round(1 + m * 22.970) + 0.5} 27v-${long ? 5 : 3}`;
}
document.getElementById("ticks").setAttribute("d", ticks);
```
